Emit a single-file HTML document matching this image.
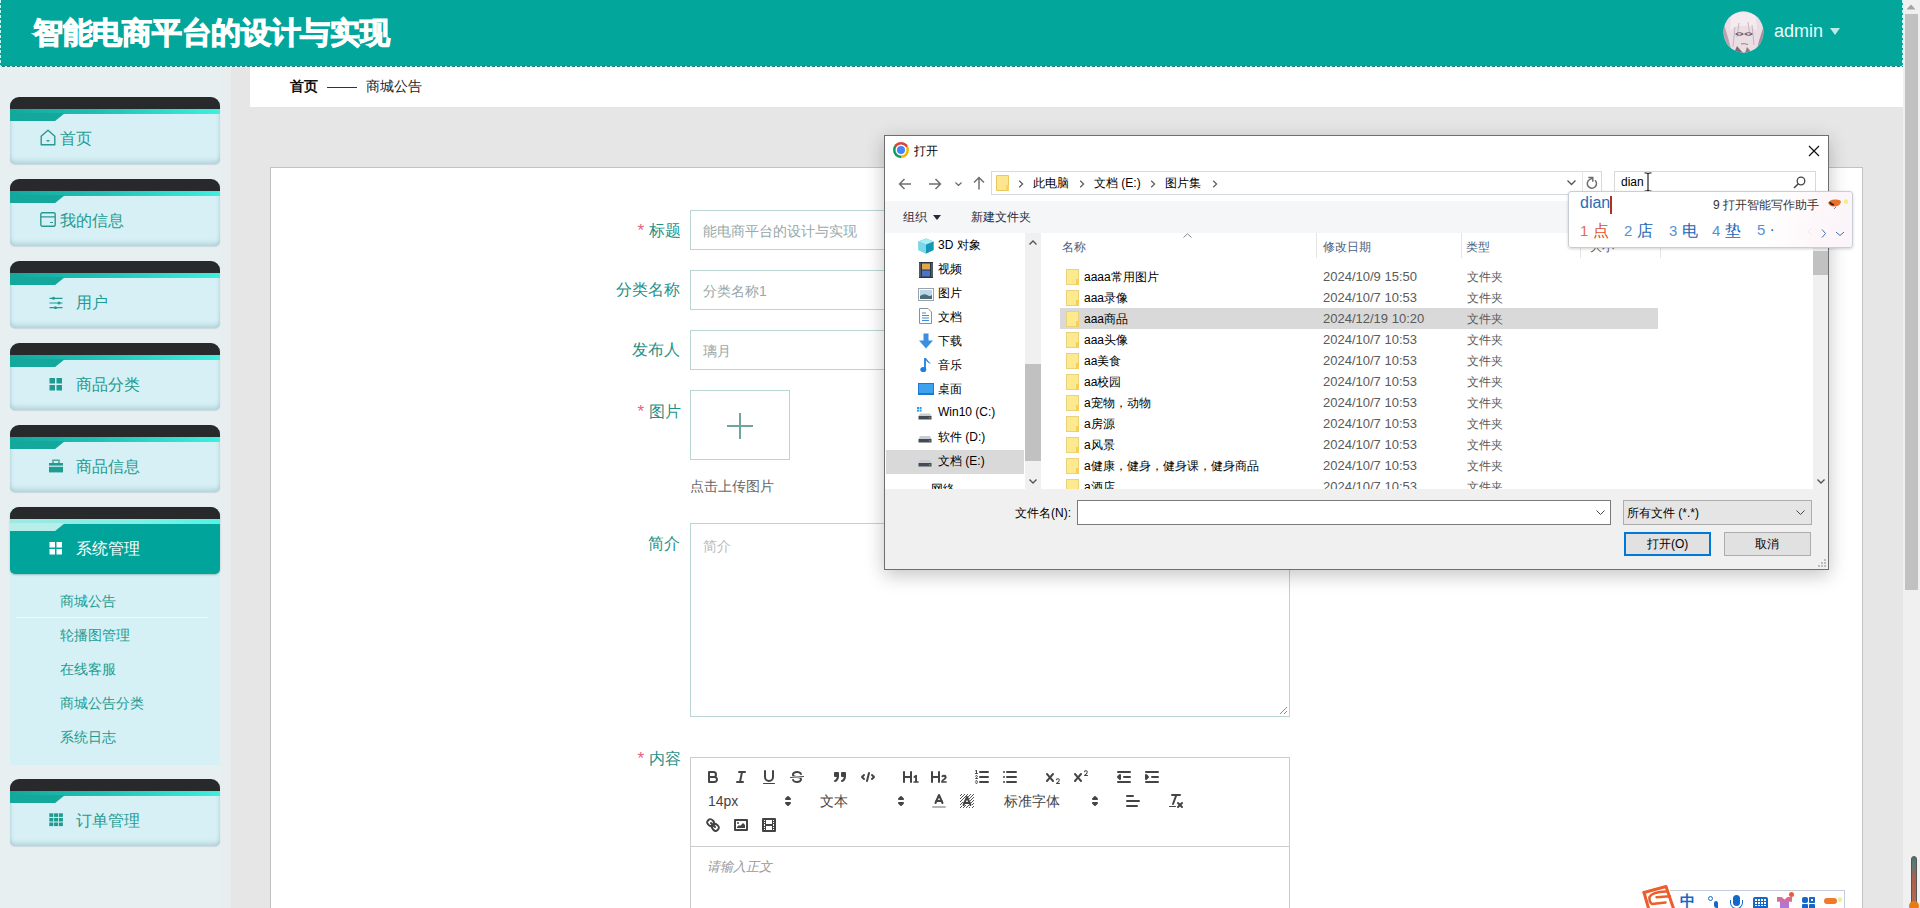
<!DOCTYPE html>
<html><head><meta charset="utf-8">
<style>
*{box-sizing:border-box;margin:0;padding:0}
html,body{width:1920px;height:908px;overflow:hidden}
body{position:relative;background:#e6e6e6;font-family:"Liberation Sans",sans-serif;color:#333}
.abs{position:absolute}
#header{left:0;top:0;width:1903px;height:67px;background:#02a69b}
#hb{left:0;top:66px;width:1903px;height:1px;background:repeating-linear-gradient(90deg,#c4faf3 0 2px,#2f7d76 2px 5px)}
#hl{left:0;top:0;width:1px;height:66px;background:repeating-linear-gradient(180deg,#c4faf3 0 3px,#02a69b 3px 5px)}
#hr{left:1902px;top:0;width:1px;height:66px;background:repeating-linear-gradient(180deg,#c4faf3 0 3px,#02a69b 3px 5px)}
#title{left:33px;top:13px;font-size:30px;letter-spacing:-0.3px;font-weight:900;color:#fff;-webkit-text-stroke:1.1px #fff;white-space:nowrap}
#admin{left:1774px;top:21px;font-size:18px;color:#e8fffb}
#caret{left:1830px;top:28px;width:0;height:0;border-left:5px solid transparent;border-right:5px solid transparent;border-top:7px solid #b9ece6}
#sidebar{left:0;top:67px;width:231px;height:841px;background:linear-gradient(90deg,#e7eff1 0,#e7eff1 94%,#e9ecec 100%)}
.mi{position:absolute;left:10px;width:210px;height:67px;border-radius:9px 9px 5px 5px;overflow:hidden;background:#d6f0f5;box-shadow:inset 0 -4px 4px -1px rgba(120,160,175,.35),inset 3px 0 3px -2px rgba(150,185,195,.3),inset -3px 0 3px -2px rgba(150,185,195,.3),0 1px 1px rgba(150,175,185,.35)}
.mi .dk{position:absolute;left:0;top:0;width:210px;height:12px;background:#27292b}
.mi .st{position:absolute;left:0;top:12px;width:210px;height:5px;background:linear-gradient(90deg,#12a99d,#1fbfb2 40%,#3df0e0 100%)}
.mi .sl{position:absolute;left:0;top:16px;width:55px;height:8px;background:#14a89c;clip-path:polygon(0 0,100% 0,100% 0,82% 100%,0 100%)}
.mi .lb{position:absolute;top:32px;font-size:16px;color:#1f9b92;white-space:nowrap}
.mi.act{background:#00a49a;box-shadow:0 1px 2px rgba(0,80,70,.3)}
.mi.act .st{background:linear-gradient(90deg,#9ee8e2,#7ff0e6 60%,#52f4e6)}
.mi.act .sl{background:#b8eeea}
.mi.act .lb{color:#fff}
#sub{left:10px;top:574px;width:210px;height:191px;background:#d6f1f5}
.si{position:absolute;left:50px;font-size:14px;color:#1f9b92;white-space:nowrap}
#bc{left:250px;top:67px;width:1653px;height:40px;background:#fff}
#card{left:270px;top:167px;width:1593px;height:760px;background:#fff;border:1px solid #c2c2c2}
.lab{position:absolute;font-size:16px;color:#1f9188;text-align:right;white-space:nowrap}
.lab i{font-style:normal;color:#e2637f;margin-right:5px;font-size:17px;position:relative;top:0px}
.inp{position:absolute;left:690px;width:600px;height:40px;border:1px solid #b9d6d3;background:#fff}
.ph{position:absolute;left:12px;top:12px;font-size:14px;color:#97a9a8;white-space:nowrap}
#scroll{left:1903px;top:0;width:17px;height:908px;background:#f0f0f0}

#dlg{position:absolute;left:884px;top:135px;width:945px;height:435px;background:#fff;border:1px solid #6e6e6e;box-shadow:0 5px 18px rgba(0,0,0,.24);font-size:12px;color:#000;overflow:hidden}
#dlg .a{position:absolute;white-space:nowrap}
.nv{position:absolute;left:53px;font-size:12px;color:#000;white-space:nowrap}
.ni{position:absolute;left:32px;width:16px;height:16px}
.fr{position:absolute;left:0;width:944px;height:21px}
.fr .fi{position:absolute;left:181px;top:3px;width:13px;height:16px;background:#fde98e;border:1px solid #ead27c}
.fr .fi:before{content:"";position:absolute;right:-1px;bottom:-1px;width:3px;height:6px;background:#f6cf5a}
.fr .fn{position:absolute;left:199px;top:3px;color:#000}
.fr .fd{position:absolute;left:438px;top:3px;color:#5a5a5a;font-size:13px}
.fr .ft{position:absolute;left:582px;top:3px;color:#5a5a5a}

.qb{position:absolute;width:18px;height:18px}
.qb .s{fill:none;stroke:#444;stroke-width:2;stroke-linecap:round;stroke-linejoin:round}
.qb .t{fill:none;stroke:#444;stroke-width:1;stroke-linecap:round;stroke-linejoin:round}
.qb .f{fill:#444}
.pk{position:absolute;font-size:14px;color:#444;font-weight:500;white-space:nowrap}
</style></head><body>
<div id="header" class="abs"></div><div id="hb" class="abs"></div><div id="hl" class="abs"></div><div id="hr" class="abs"></div>
<div id="title" class="abs">智能电商平台的设计与实现</div>
<svg class="abs" style="left:1723px;top:11px" width="41" height="42" viewBox="0 0 41 42"><defs><clipPath id="avc"><ellipse cx="20.5" cy="21" rx="20" ry="20.7"/></clipPath></defs><g clip-path="url(#avc)"><rect width="41" height="42" fill="#eadde3"/><path d="M0 10L6 30L9 42H0Z" fill="#b9a3b0"/><path d="M41 14L36 30L33 42H41Z" fill="#a28e9c"/><path d="M8 4Q20 -2 33 5L34 20Q28 14 20 15Q12 14 7 20Z" fill="#f3ebef"/><path d="M14 35L20 42H11Z" fill="#7d6a78"/><path d="M24 36L29 42H22Z" fill="#8e7a88"/><path d="M12 16L10 36M29 14L31 34M16 12L14 26M25 11L27 25" stroke="#c8b4bf" stroke-width="1"/></g><path d="M13 23Q16.5 20.5 20 23Q16.5 25.5 13 23Z" fill="#fff" stroke="#6d5a66" stroke-width="1.1"/><path d="M22 23Q25.5 20.5 29 23Q25.5 25.5 22 23Z" fill="#fff" stroke="#6d5a66" stroke-width="1.1"/><path d="M18 33Q21 32 25 33.5" stroke="#8a7080" stroke-width="0.9" fill="none"/></svg>
<div id="admin" class="abs">admin</div>
<div id="caret" class="abs"></div>

<div id="sidebar" class="abs"></div>
<div class="mi" style="top:97px"><div class="dk"></div><div class="st"></div><div class="sl"></div><svg class="abs" style="left:30px;top:32px" width="16" height="17" viewBox="0 0 16 17"><path d="M1.2 7.2L8 1.2L14.8 7.2V15.8H1.2Z" fill="none" stroke="#2a9a90" stroke-width="1.4" stroke-linejoin="round"/><path d="M6.5 11.2L8 12.2L9.5 11.2" fill="none" stroke="#2a9a90" stroke-width="1.2"/></svg><div class="lb" style="left:50px">首页</div></div>
<div class="mi" style="top:179px"><div class="dk"></div><div class="st"></div><div class="sl"></div><svg class="abs" style="left:30px;top:33px" width="16" height="15" viewBox="0 0 16 15"><rect x="0.8" y="0.8" width="14.4" height="13.4" rx="1.5" fill="none" stroke="#2a9a90" stroke-width="1.4"/><path d="M1 4.8H15" stroke="#2a9a90" stroke-width="1.3"/><path d="M10 10.5H13" stroke="#2a9a90" stroke-width="1"/></svg><div class="lb" style="left:50px">我的信息</div></div>
<div class="mi" style="top:261px"><div class="dk"></div><div class="st"></div><div class="sl"></div><svg class="abs" style="left:39px;top:35px" width="14" height="13" viewBox="0 0 14 13"><path d="M0.5 2.3H13.5M0.5 7H13.5M0.5 11.7H13.5" stroke="#1f9b8f" stroke-width="1.2"/><circle cx="4.5" cy="2.3" r="1.5" fill="#1f9b8f"/><circle cx="10" cy="7" r="1.5" fill="#1f9b8f"/><circle cx="6.5" cy="11.7" r="1.5" fill="#1f9b8f"/></svg><div class="lb" style="left:66px">用户</div></div>
<div class="mi" style="top:343px"><div class="dk"></div><div class="st"></div><div class="sl"></div><svg class="abs" style="left:39px;top:35px" width="14" height="13" viewBox="0 0 14 13"><rect x="0.5" y="0" width="5.5" height="5.5" fill="#1f9b8f"/><rect x="7.5" y="0" width="5.5" height="5.5" fill="#1f9b8f"/><rect x="0.5" y="7" width="5.5" height="5.5" fill="#1f9b8f"/><rect x="7.5" y="7" width="5.5" height="5.5" fill="#1f9b8f"/></svg><div class="lb" style="left:66px">商品分类</div></div>
<div class="mi" style="top:425px"><div class="dk"></div><div class="st"></div><div class="sl"></div><svg class="abs" style="left:39px;top:34px" width="14" height="14" viewBox="0 0 14 14"><path d="M4 4V1.2H10V4" fill="none" stroke="#4ba69c" stroke-width="1.6"/><rect x="0" y="4" width="14" height="2.6" fill="#1f9b8f"/><rect x="0" y="7.8" width="14" height="5.6" fill="#1f9b8f"/></svg><div class="lb" style="left:66px">商品信息</div></div>
<div id="sub" class="abs">
 <div class="si" style="top:19px">商城公告</div>
 <div class="abs" style="left:6px;top:43px;width:192px;height:1px;background:#eefbfd"></div>
 <div class="si" style="top:53px">轮播图管理</div>
 <div class="si" style="top:87px">在线客服</div>
 <div class="si" style="top:121px">商城公告分类</div>
 <div class="si" style="top:155px">系统日志</div>
</div>
<div class="mi act" style="top:507px"><div class="dk"></div><div class="st"></div><div class="sl"></div><svg class="abs" style="left:39px;top:35px" width="14" height="13" viewBox="0 0 14 13"><rect x="0.5" y="0" width="5.5" height="5.5" fill="#ffffff"/><rect x="7.5" y="0" width="5.5" height="5.5" fill="#ffffff"/><rect x="0.5" y="7" width="5.5" height="5.5" fill="#ffffff"/><rect x="7.5" y="7" width="5.5" height="5.5" fill="#ffffff"/></svg><div class="lb" style="left:66px">系统管理</div></div>
<div class="mi" style="top:779px"><div class="dk"></div><div class="st"></div><div class="sl"></div><svg class="abs" style="left:39px;top:34px" width="14" height="14" viewBox="0 0 14 14"><rect x="0.3" y="0.3" width="4" height="3.6" fill="#1f9b8f"/><rect x="0.3" y="4.8999999999999995" width="4" height="3.6" fill="#1f9b8f"/><rect x="0.3" y="9.5" width="4" height="3.6" fill="#1f9b8f"/><rect x="5.1" y="0.3" width="4" height="3.6" fill="#1f9b8f"/><rect x="5.1" y="4.8999999999999995" width="4" height="3.6" fill="#1f9b8f"/><rect x="5.1" y="9.5" width="4" height="3.6" fill="#1f9b8f"/><rect x="9.9" y="0.3" width="4" height="3.6" fill="#1f9b8f"/><rect x="9.9" y="4.8999999999999995" width="4" height="3.6" fill="#1f9b8f"/><rect x="9.9" y="9.5" width="4" height="3.6" fill="#1f9b8f"/></svg><div class="lb" style="left:66px">订单管理</div></div>

<div id="bc" class="abs"></div>
<div class="abs" style="left:290px;top:78px;font-size:14px;font-weight:bold;color:#111">首页</div>
<div class="abs" style="left:327px;top:87px;width:30px;height:1px;background:#333"></div>
<div class="abs" style="left:366px;top:78px;font-size:14px;color:#222">商城公告</div>

<div id="card" class="abs"></div>
<div class="lab" style="left:601px;top:221px;width:80px"><i>*</i>标题</div>
<div class="inp" style="top:210px"><div class="ph">能电商平台的设计与实现</div></div>
<div class="lab" style="left:580px;top:280px;width:100px">分类名称</div>
<div class="inp" style="top:270px"><div class="ph">分类名称1</div></div>
<div class="lab" style="left:580px;top:340px;width:100px">发布人</div>
<div class="inp" style="top:330px"><div class="ph">璃月</div></div>


<div class="lab" style="left:581px;top:402px;width:100px"><i>*</i>图片</div>
<div class="abs" style="left:690px;top:390px;width:100px;height:70px;border:1px solid #b9d6d3;background:#fff"></div>
<div class="abs" style="left:727px;top:425px;width:26px;height:2px;background:#6fa5a0"></div>
<div class="abs" style="left:739px;top:413px;width:2px;height:26px;background:#6fa5a0"></div>
<div class="abs" style="left:690px;top:478px;font-size:14px;color:#666">点击上传图片</div>
<div class="lab" style="left:580px;top:534px;width:100px">简介</div>
<div class="abs" style="left:690px;top:523px;width:600px;height:194px;border:1px solid #b9d6d3;background:#fff"><div class="ph" style="left:12px;top:14px;color:#bbb">简介</div></div>
<div class="lab" style="left:581px;top:749px;width:100px"><i>*</i>内容</div>
<div id="editor" class="abs" style="left:690px;top:757px;width:600px;height:200px;border:1px solid #ccc;background:#fff">
 <div class="abs" style="left:0;top:88px;width:598px;height:1px;background:#ccc"></div>
 <div class="abs" style="left:16px;top:100px;font-size:13px;color:#999;font-style:italic">请输入正文</div>
</div>

<svg class="qb" style="left:704px;top:768px" viewBox="0 0 18 18"><path class="s" d="M5,4H9.5A2.5,2.5,0,0,1,12,6.5v0A2.5,2.5,0,0,1,9.5,9H5A0,0,0,0,1,5,9V4A0,0,0,0,1,5,4Z"/><path class="s" d="M5,9h5.5A2.5,2.5,0,0,1,13,11.5v0A2.5,2.5,0,0,1,10.5,14H5a0,0,0,0,1,0,0V9A0,0,0,0,1,5,9Z"/></svg><svg class="qb" style="left:732px;top:768px" viewBox="0 0 18 18"><line class="s" x1="7" x2="13" y1="4" y2="4"/><line class="s" x1="5" x2="11" y1="14" y2="14"/><line class="s" x1="8" x2="10" y1="14" y2="4"/></svg><svg class="qb" style="left:760px;top:768px" viewBox="0 0 18 18"><path class="s" d="M5,3V9a4.012,4.012,0,0,0,4,4H9a4.012,4.012,0,0,0,4-4V3"/><rect class="f" height="1" rx="0.5" ry="0.5" width="12" x="3" y="15"/></svg><svg class="qb" style="left:788px;top:768px" viewBox="0 0 18 18"><line class="t" x1="15.5" x2="2.5" y1="8.5" y2="9.5"/><path class="f" d="M9.007,8C6.542,7.791,6,7.519,6,6.5,6,5.792,7.283,5,9,5c1.571,0,2.765.679,2.969,1.309a1,1,0,0,0,1.9-.617C13.356,4.106,11.354,3,9,3,6.2,3,4,4.538,4,6.5a3.2,3.2,0,0,0,.5,1.843Z"/><path class="f" d="M8.984,10C11.457,10.208,12,10.479,12,11.5c0,.708-1.283,1.5-3,1.5-1.571,0-2.765-.679-2.969-1.309a1,1,0,1,0-1.9.617C4.644,13.894,6.646,15,9,15c2.8,0,5-1.538,5-3.5a3.2,3.2,0,0,0-.5-1.843Z"/></svg><svg class="qb" style="left:831px;top:768px" viewBox="0 0 18 18"><rect class="f s" height="3" width="3" x="4" y="5"/><rect class="f s" height="3" width="3" x="11" y="5"/><path class="s" style="fill:#444" d="M7,8c0,4.031-3,5-3,5"/><path class="s" style="fill:#444" d="M14,8c0,4.031-3,5-3,5"/></svg><svg class="qb" style="left:859px;top:768px" viewBox="0 0 18 18"><polyline class="s" points="5 7 3 9 5 11"/><polyline class="s" points="13 7 15 9 13 11"/><line class="s" x1="10" x2="8" y1="5" y2="13"/></svg><svg class="qb" style="left:902px;top:768px" viewBox="0 0 18 18"><path class="f" d="M10,4V14a1,1,0,0,1-2,0V10H3v4a1,1,0,0,1-2,0V4A1,1,0,0,1,3,4V8H8V4a1,1,0,0,1,2,0Zm6.06787,9.209H14.98975V7.59863a.54085.54085,0,0,0-.605-.60547h-.62744a1.01119,1.01119,0,0,0-.748.29688L11.645,8.56641a.5435.5435,0,0,0-.022.8584l.28613.30762a.53861.53861,0,0,0,.84717.0332l.09912-.08789a1.2137,1.2137,0,0,0,.2417-.35254h.02246s-.01123.30859-.01123.60547V13.209H12.041a.54085.54085,0,0,0-.605.60547v.43945a.54085.54085,0,0,0,.605.60547h4.02686a.54085.54085,0,0,0,.605-.60547v-.43945A.54085.54085,0,0,0,16.06787,13.209Z"/></svg><svg class="qb" style="left:930px;top:768px" viewBox="0 0 18 18"><path class="f" d="M16.73975,13.81445v.43945a.54085.54085,0,0,1-.605.60547H11.855a.58392.58392,0,0,1-.64893-.60547V14.0127c0-2.90527,3.39941-3.42187,3.39941-4.55469a.77675.77675,0,0,0-.84717-.78125,1.17684,1.17684,0,0,0-.83594.38477c-.2749.26367-.561.374-.85791.13184l-.4292-.34082c-.30811-.24219-.38525-.51758-.1543-.81445a2.97155,2.97155,0,0,1,2.45361-1.17676,2.45393,2.45393,0,0,1,2.68408,2.40918c0,2.45312-3.1792,2.92676-3.27832,3.93848h2.79443A.54085.54085,0,0,1,16.73975,13.81445ZM9,3A.99974.99974,0,0,0,8,4V8H3V4A1,1,0,0,0,1,4V14a1,1,0,0,0,2,0V10H8v4a1,1,0,0,0,2,0V4A.99974.99974,0,0,0,9,3Z"/></svg><svg class="qb" style="left:973px;top:768px" viewBox="0 0 18 18"><line class="s" x1="7" x2="15" y1="4" y2="4"/><line class="s" x1="7" x2="15" y1="9" y2="9"/><line class="s" x1="7" x2="15" y1="14" y2="14"/><line class="t" x1="2.5" x2="4.5" y1="5.5" y2="5.5"/><path class="f" d="M3.5,6A0.5,0.5,0,0,1,3,5.5V3.085l-0.276.138A0.5,0.5,0,0,1,2.053,3c-0.124-.247-0.023-0.324.224-0.447l1-.5A0.5,0.5,0,0,1,4,2.5v3A0.5,0.5,0,0,1,3.5,6Z"/><path class="t" d="M4.5,10.5h-2c0-.234,1.85-1.076,1.85-2.234A0.959,0.959,0,0,0,2.5,8.156"/><path class="t" d="M2.5,14.846a0.959,0.959,0,0,0,1.85-.109A0.7,0.7,0,0,0,3.75,14a0.688,0.688,0,0,0,.6-0.736,0.959,0.959,0,0,0-1.85-.109"/></svg><svg class="qb" style="left:1001px;top:768px" viewBox="0 0 18 18"><line class="s" x1="6" x2="15" y1="4" y2="4"/><line class="s" x1="6" x2="15" y1="9" y2="9"/><line class="s" x1="6" x2="15" y1="14" y2="14"/><line class="s" x1="3" x2="3" y1="4" y2="4"/><line class="s" x1="3" x2="3" y1="9" y2="9"/><line class="s" x1="3" x2="3" y1="14" y2="14"/></svg><svg class="qb" style="left:1044px;top:768px" viewBox="0 0 18 18"><path class="f" d="M15.5,15H13.861a3.858,3.858,0,0,0,1.914-2.975,1.8,1.8,0,0,0-1.6-1.751A1.921,1.921,0,0,0,12.021,11.7a0.50013,0.50013,0,1,0,.957.291h0a0.914,0.914,0,0,1,1.053-.725,0.81,0.81,0,0,1,.744.762c0,1.076-1.16971,1.86982-1.93971,2.43082A1.45639,1.45639,0,0,0,12,15.5a0.5,0.5,0,0,0,.5.5h3A0.5,0.5,0,0,0,15.5,15Z"/><path class="f" d="M9.65,5.241a1,1,0,0,0-1.409.108L6,7.964,3.759,5.349A1,1,0,0,0,2.192,6.59178Q2.21541,6.6213,2.241,6.649L4.684,9.5,2.241,12.35A1,1,0,0,0,3.71,13.70722q0.02557-.02768.049-0.05722L6,11.036,8.241,13.65a1,1,0,1,0,1.567-1.24277Q9.78459,12.3777,9.759,12.35L7.316,9.5,9.759,6.651A1,1,0,0,0,9.65,5.241Z"/></svg><svg class="qb" style="left:1072px;top:768px" viewBox="0 0 18 18"><path class="f" d="M15.5,7H13.861a4.015,4.015,0,0,0,1.914-2.975,1.8,1.8,0,0,0-1.6-1.751A1.922,1.922,0,0,0,12.021,3.7a0.5,0.5,0,1,0,.957.291,0.917,0.917,0,0,1,1.053-.725,0.81,0.81,0,0,1,.744.762c0,1.077-1.164,1.925-1.934,2.486A1.423,1.423,0,0,0,12,7.5a0.5,0.5,0,0,0,.5.5h3A0.5,0.5,0,0,0,15.5,7Z"/><path class="f" d="M9.651,5.241a1,1,0,0,0-1.41.108L6,7.964,3.759,5.349a1,1,0,1,0-1.519,1.3L4.683,9.5,2.241,12.35a1,1,0,1,0,1.519,1.3L6,11.036,8.241,13.65a1,1,0,0,0,1.519-1.3L7.317,9.5,9.759,6.651A1,1,0,0,0,9.651,5.241Z"/></svg><svg class="qb" style="left:1115px;top:768px" viewBox="0 0 18 18"><line class="s" x1="3" x2="15" y1="14" y2="14"/><line class="s" x1="3" x2="15" y1="4" y2="4"/><line class="s" x1="9" x2="15" y1="9" y2="9"/><polyline class="s" style="fill:#444" points="5 7 5 11 3 9 5 7"/></svg><svg class="qb" style="left:1143px;top:768px" viewBox="0 0 18 18"><line class="s" x1="3" x2="15" y1="14" y2="14"/><line class="s" x1="3" x2="15" y1="4" y2="4"/><line class="s" x1="9" x2="15" y1="9" y2="9"/><polyline class="s" style="fill:#444" points="3 7 3 11 5 9 3 7"/></svg><div class="pk" style="left:708px;top:793px">14px</div><svg class="qb" style="left:779px;top:792px" viewBox="0 0 18 18"><polygon class="s" style="fill:#444" points="7 11 9 13 11 11 7 11"/><polygon class="s" style="fill:#444" points="7 7 9 5 11 7 7 7"/></svg><div class="pk" style="left:820px;top:793px">文本</div><svg class="qb" style="left:892px;top:792px" viewBox="0 0 18 18"><polygon class="s" style="fill:#444" points="7 11 9 13 11 11 7 11"/><polygon class="s" style="fill:#444" points="7 7 9 5 11 7 7 7"/></svg><svg class="qb" style="left:930px;top:792px" viewBox="0 0 18 18"><line class="s" style="stroke-opacity:.4" x1="3" x2="15" y1="15" y2="15"/><polyline class="s" points="5.5 11 9 3 12.5 11"/><line class="s" x1="11.63" x2="6.38" y1="9" y2="9"/></svg><svg class="qb" style="left:958px;top:792px" viewBox="0 0 18 18"><g class="f" style="opacity:.9"><rect height="1" width="1" x="4" y="4"/><rect height="1" width="1" x="2" y="6"/><rect height="1" width="1" x="3" y="5"/><rect height="1" width="1" x="4" y="7"/><rect height="1" width="1" x="2" y="12"/><rect height="1" width="1" x="2" y="9"/><rect height="1" width="1" x="2" y="15"/><rect height="1" width="1" x="3" y="8"/><rect height="1" width="1" x="12" y="2"/><rect height="1" width="1" x="11" y="3"/><rect height="1" width="1" x="2" y="3"/><rect height="1" width="1" x="6" y="2"/><rect height="1" width="1" x="3" y="2"/><rect height="1" width="1" x="5" y="3"/><rect height="1" width="1" x="9" y="2"/><rect height="1" width="1" x="15" y="14"/><rect height="1" width="1" x="13" y="7"/><rect height="1" width="1" x="15" y="5"/><rect height="1" width="1" x="14" y="6"/><rect height="1" width="1" x="15" y="8"/><rect height="1" width="1" x="14" y="9"/><rect height="1" width="1" x="14" y="3"/><rect height="1" width="1" x="15" y="2"/><rect height="1" width="1" x="12" y="5"/><rect height="1" width="1" x="13" y="4"/><rect height="1" width="1" x="9" y="14"/><rect height="1" width="1" x="8" y="15"/><rect height="1" width="1" x="5" y="15"/><rect height="1" width="1" x="11" y="15"/><rect height="1" width="1" x="14" y="15"/><rect height="1" width="1" x="15" y="11"/><rect height="1" width="1" x="3" y="11"/><rect height="1" width="1" x="4" y="10"/><rect height="1" width="1" x="5" y="6"/><rect height="1" width="1" x="6" y="5"/><rect height="1" width="1" x="13" y="10"/><rect height="1" width="1" x="12" y="8"/><rect height="1" width="1" x="3" y="14"/><rect height="1" width="1" x="7" y="13"/><rect height="1" width="1" x="10" y="13"/><rect height="1" width="1" x="14" y="12"/><rect height="1" width="1" x="6" y="14"/><rect height="1" width="1" x="7" y="4"/><rect height="1" width="1" x="10" y="4"/><rect height="1" width="1" x="8" y="3"/><rect height="1" width="1" x="11" y="6"/></g><polyline class="s" points="5.5 13 9 5 12.5 13"/><line class="s" x1="11.63" x2="6.38" y1="11" y2="11"/></svg><div class="pk" style="left:1004px;top:793px">标准字体</div><svg class="qb" style="left:1086px;top:792px" viewBox="0 0 18 18"><polygon class="s" style="fill:#444" points="7 11 9 13 11 11 7 11"/><polygon class="s" style="fill:#444" points="7 7 9 5 11 7 7 7"/></svg><svg class="qb" style="left:1124px;top:792px" viewBox="0 0 18 18"><line class="s" x1="3" x2="15" y1="9" y2="9"/><line class="s" x1="3" x2="13" y1="14" y2="14"/><line class="s" x1="3" x2="9" y1="4" y2="4"/></svg><svg class="qb" style="left:1167px;top:792px" viewBox="0 0 18 18"><line class="s" x1="5" x2="13" y1="3" y2="3"/><line class="s" x1="6" x2="9.35" y1="12" y2="3"/><line class="s" x1="11" x2="15" y1="11" y2="15"/><line class="s" x1="15" x2="11" y1="11" y2="15"/><rect class="f" height="1" rx="0.5" ry="0.5" width="7" x="2" y="14"/></svg><svg class="qb" style="left:704px;top:816px" viewBox="0 0 18 18"><line class="s" x1="7" x2="11" y1="7" y2="11"/><path class="s" d="M8.9,4.577a3.476,3.476,0,0,1,.36,4.679A3.476,3.476,0,0,1,4.577,8.9C3.185,7.5,2.035,6.4,4.217,4.217S7.5,3.185,8.9,4.577Z"/><path class="s" d="M13.423,9.1a3.476,3.476,0,0,0-4.679-.36,3.476,3.476,0,0,0,.36,4.679c1.392,1.392,2.5,2.542,4.679.36S14.815,10.5,13.423,9.1Z"/></svg><svg class="qb" style="left:732px;top:816px" viewBox="0 0 18 18"><rect class="s" height="10" width="12" x="3" y="4"/><circle class="f" cx="6" cy="7" r="1"/><polyline class="f" points="5 12 5 11 7 9 8 10 11 7 13 9 13 12 5 12"/></svg><svg class="qb" style="left:760px;top:816px" viewBox="0 0 18 18"><rect class="s" height="12" width="12" x="3" y="3"/><rect class="f" height="12" width="1" x="5" y="3"/><rect class="f" height="12" width="1" x="12" y="3"/><rect class="f" height="2" width="8" x="5" y="8"/><rect class="f" height="1" width="3" x="2" y="5"/><rect class="f" height="1" width="3" x="2" y="7"/><rect class="f" height="1" width="3" x="2" y="10"/><rect class="f" height="1" width="3" x="2" y="12"/><rect class="f" height="1" width="3" x="13" y="5"/><rect class="f" height="1" width="3" x="13" y="7"/><rect class="f" height="1" width="3" x="13" y="10"/><rect class="f" height="1" width="3" x="13" y="12"/></svg>
<div id="dlg">
 <div class="a" style="left:8px;top:6px;width:16px;height:16px;border-radius:50%;background:conic-gradient(from -60deg,#db4437 0 120deg,#f4b400 120deg 240deg,#0f9d58 240deg 360deg)"><div style="position:absolute;left:4px;top:4px;width:8px;height:8px;border-radius:50%;background:#4285f4;box-shadow:0 0 0 1.5px #fff"></div></div>
 <div class="a" style="left:29px;top:7px">打开</div>
 <svg class="a" style="left:923px;top:9px" width="12" height="12" viewBox="0 0 12 12"><path d="M1 1L11 11M11 1L1 11" stroke="#111" stroke-width="1.2"/></svg>
 <!-- address row -->
 <svg class="a" style="left:13px;top:42px" width="14" height="12" viewBox="0 0 14 12"><path d="M13 6H1.5M6.5 1L1.5 6L6.5 11" stroke="#707070" stroke-width="1.5" fill="none"/></svg>
 <svg class="a" style="left:43px;top:42px" width="14" height="12" viewBox="0 0 14 12"><path d="M1 6H12.5M7.5 1L12.5 6L7.5 11" stroke="#707070" stroke-width="1.5" fill="none"/></svg>
 <svg class="a" style="left:70px;top:46px" width="7" height="4" viewBox="0 0 7 4"><path d="M0.5 0.5L3.5 3.5L6.5 0.5" stroke="#6a6a6a" stroke-width="1.2" fill="none"/></svg>
 <svg class="a" style="left:88px;top:40px" width="12" height="14" viewBox="0 0 12 14"><path d="M6 13.5V1.5M1 6.5L6 1.5L11 6.5" stroke="#707070" stroke-width="1.5" fill="none"/></svg>
 <div class="a" style="left:106px;top:35px;width:611px;height:24px;border:1px solid #d9d9d9"></div>
 <svg class="a" style="left:111px;top:39px" width="14" height="16" viewBox="0 0 14 16"><path d="M0.5 0.5H12.5V15.5H0.5Z" fill="#fde68f" stroke="#e9c95c" stroke-width="1"/><path d="M10 10H13V15.5H10Z" fill="#f3d36e"/></svg>
 <svg class="a" style="left:133px;top:44px" width="6" height="8" viewBox="0 0 6 8"><path d="M1.2 0.8L4.6 4L1.2 7.2" stroke="#5a5a5a" stroke-width="1.2" fill="none"/></svg>
 <div class="a" style="left:148px;top:39px">此电脑</div>
 <svg class="a" style="left:194px;top:44px" width="6" height="8" viewBox="0 0 6 8"><path d="M1.2 0.8L4.6 4L1.2 7.2" stroke="#5a5a5a" stroke-width="1.2" fill="none"/></svg>
 <div class="a" style="left:209px;top:39px">文档 (E:)</div>
 <svg class="a" style="left:265px;top:44px" width="6" height="8" viewBox="0 0 6 8"><path d="M1.2 0.8L4.6 4L1.2 7.2" stroke="#5a5a5a" stroke-width="1.2" fill="none"/></svg>
 <div class="a" style="left:280px;top:39px">图片集</div>
 <svg class="a" style="left:327px;top:44px" width="6" height="8" viewBox="0 0 6 8"><path d="M1.2 0.8L4.6 4L1.2 7.2" stroke="#5a5a5a" stroke-width="1.2" fill="none"/></svg>
 <svg class="a" style="left:682px;top:44px" width="9" height="6" viewBox="0 0 9 6"><path d="M0.5 0.5L4.5 4.5L8.5 0.5" stroke="#555" stroke-width="1.3" fill="none"/></svg>
 <div class="a" style="left:697px;top:35px;width:1px;height:24px;background:#e5e5e5"></div>
 <svg class="a" style="left:699px;top:39px" width="16" height="16" viewBox="0 0 16 16"><path d="M11 5.2A4.6 4.6 0 1 1 5.6 4.6L8.2 3.2" stroke="#6e6e6e" stroke-width="1.5" fill="none"/><path d="M4.3 2.6H8.8V6.8" stroke="#6e6e6e" stroke-width="1.5" fill="none"/></svg>
 <div class="a" style="left:729px;top:35px;width:202px;height:24px;border:1px solid #d9d9d9"></div>
 <div class="a" style="left:736px;top:39px;font-size:12px">dian</div>
 <svg class="a" style="left:908px;top:40px" width="13" height="13" viewBox="0 0 13 13"><circle cx="8" cy="5" r="3.8" stroke="#444" stroke-width="1.3" fill="none"/><path d="M5.3 7.7L1 12" stroke="#444" stroke-width="1.5"/></svg>
 <!-- command bar -->
 <div class="a" style="left:0;top:65px;width:944px;height:32px;background:#f5f6f7"></div>
 <div class="a" style="left:18px;top:73px;color:#1e2b40">组织</div>
 <svg class="a" style="left:48px;top:79px" width="8" height="5" viewBox="0 0 8 5"><path d="M0 0H8L4 5Z" fill="#1e2b40"/></svg>
 <div class="a" style="left:86px;top:73px;color:#1e2b40">新建文件夹</div>
 <!-- nav pane -->
 <div class="a" style="left:1px;top:314px;width:138px;height:24px;background:#d9d9d9"></div>
 <svg class="a" style="left:33px;top:102px" width="16" height="16" viewBox="0 0 16 16"><path d="M8 0.5L15.5 3.5V12L8 15.5L0.5 12V3.5Z" fill="#27b3cf"/><path d="M0.5 3.5L8 6.5V15.5L0.5 12Z" fill="#7ad8ea"/><path d="M8 6.5L15.5 3.5V12L8 15.5Z" fill="#1497b5"/><path d="M0.5 3.5L8 0.5L15.5 3.5L8 6.5Z" fill="#a8ecf6"/></svg><div class="nv" style="top:101px;left:53px">3D 对象</div>
<svg class="a" style="left:34px;top:126px" width="14" height="16" viewBox="0 0 14 16"><rect x="0" y="0" width="14" height="16" fill="#2d3442"/><rect x="3" y="1.5" width="8" height="6" fill="#e0a84a"/><rect x="3" y="8.5" width="8" height="6" fill="#4a74c8"/><path d="M1 1.5V14.5M13 1.5V14.5" stroke="#ccc" stroke-width="1" stroke-dasharray="1 1"/></svg><div class="nv" style="top:125px;left:53px">视频</div>
<svg class="a" style="left:33px;top:152px" width="16" height="13" viewBox="0 0 16 13"><rect x="0.5" y="0.5" width="15" height="12" fill="#fff" stroke="#9aa3ad"/><rect x="2" y="2" width="12" height="9" fill="#bcd6ea"/><path d="M2 8Q6 5 9 7T14 7V11H2Z" fill="#4a6e78"/></svg><div class="nv" style="top:149px;left:53px">图片</div>
<svg class="a" style="left:34px;top:172px" width="13" height="16" viewBox="0 0 13 16"><path d="M0.5 0.5H9L12.5 4V15.5H0.5Z" fill="#fff" stroke="#8a9299"/><path d="M3 5H7M3 7.5H10M3 10H10M3 12.5H10" stroke="#3b8ed8" stroke-width="1"/></svg><div class="nv" style="top:173px;left:53px">文档</div>
<svg class="a" style="left:33px;top:197px" width="16" height="16" viewBox="0 0 16 16"><path d="M5.5 0.5H10.5V7.5H15L8 15.5L1 7.5H5.5Z" fill="#3c8ee0"/></svg><div class="nv" style="top:197px;left:53px">下载</div>
<svg class="a" style="left:35px;top:221px" width="12" height="16" viewBox="0 0 12 16"><path d="M5 1V12" stroke="#1f7fdc" stroke-width="1.8"/><path d="M5 1Q6 5 11 7Q8 4 5.9 1Z" fill="#1f7fdc"/><ellipse cx="3.3" cy="12.5" rx="3" ry="2.6" fill="#1f7fdc"/></svg><div class="nv" style="top:221px;left:53px">音乐</div>
<svg class="a" style="left:33px;top:247px" width="16" height="12" viewBox="0 0 16 12"><rect x="0" y="0" width="16" height="12" fill="#1e78d2"/><rect x="1" y="1" width="14" height="9" fill="#3fa2ee"/></svg><div class="nv" style="top:245px;left:53px">桌面</div>
<svg class="a" style="left:32px;top:271px" width="16" height="13" viewBox="0 0 16 13"><rect x="0" y="0" width="2" height="2" fill="#2e9be8"/><rect x="2.6" y="0" width="2" height="2" fill="#2e9be8"/><rect x="0" y="2.6" width="2" height="2" fill="#2e9be8"/><rect x="2.6" y="2.6" width="2" height="2" fill="#2e9be8"/><path d="M3 6.5H13L14.5 9H1.5Z" fill="#c9cdd1"/><rect x="1.5" y="9" width="13" height="3.5" fill="#444a52"/><rect x="12" y="10.3" width="1.2" height="1" fill="#5fd07a"/></svg><div class="nv" style="top:269px;left:53px">Win10 (C:)</div>
<svg class="a" style="left:32px;top:296px" width="16" height="12" viewBox="0 0 16 12"><path d="M3 4H13L14.5 7H1.5Z" fill="#c9cdd1"/><rect x="1.5" y="7" width="13" height="3.5" fill="#444a52"/><rect x="12" y="8.3" width="1.2" height="1" fill="#5fd07a"/></svg><div class="nv" style="top:293px;left:53px">软件 (D:)</div>
<svg class="a" style="left:32px;top:320px" width="16" height="12" viewBox="0 0 16 12"><path d="M3 4H13L14.5 7H1.5Z" fill="#c9cdd1"/><rect x="1.5" y="7" width="13" height="3.5" fill="#444a52"/><rect x="12" y="8.3" width="1.2" height="1" fill="#5fd07a"/></svg><div class="nv" style="top:317px;left:53px">文档 (E:)</div>
<svg class="a" style="left:29px;top:349px" width="12" height="10" viewBox="0 0 12 10"><path d="M2 8Q6 0 10 8Z" fill="#8fb5c9"/></svg><div class="nv" style="top:345px;left:46px">网络</div>
 <div class="a" style="left:140px;top:97px;width:16px;height:257px;background:#f0f0f0"></div>
 <div class="a" style="left:140px;top:228px;width:16px;height:97px;background:#c1c1c1"></div>
 <svg class="a" style="left:144px;top:104px" width="8" height="5" viewBox="0 0 8 5"><path d="M0.5 4.5L4 1L7.5 4.5" stroke="#555" stroke-width="1.4" fill="none"/></svg>
 <svg class="a" style="left:144px;top:343px" width="8" height="5" viewBox="0 0 8 5"><path d="M0.5 0.5L4 4L7.5 0.5" stroke="#555" stroke-width="1.4" fill="none"/></svg>
 <!-- list header -->
 <div class="a" style="left:177px;top:103px;color:#4c607a">名称</div>
 <svg class="a" style="left:298px;top:97px" width="9" height="5" viewBox="0 0 9 5"><path d="M0.5 4.5L4.5 0.8L8.5 4.5" stroke="#888" stroke-width="1" fill="none"/></svg>
 <div class="a" style="left:431px;top:97px;width:1px;height:25px;background:#e5e5e5"></div>
 <div class="a" style="left:438px;top:103px;color:#4c607a">修改日期</div>
 <div class="a" style="left:576px;top:97px;width:1px;height:25px;background:#e5e5e5"></div>
 <div class="a" style="left:581px;top:103px;color:#4c607a">类型</div>
 <div class="a" style="left:695px;top:97px;width:1px;height:25px;background:#e5e5e5"></div>
 <div class="a" style="left:705px;top:103px;color:#4c607a">大小</div>
 <div class="a" style="left:775px;top:97px;width:1px;height:25px;background:#e5e5e5"></div>
 <div class="fr" style="top:130px"><div class="fi"></div><div class="fn">aaaa常用图片</div><div class="fd">2024/10/9 15:50</div><div class="ft">文件夹</div></div>
<div class="fr" style="top:151px"><div class="fi"></div><div class="fn">aaa录像</div><div class="fd">2024/10/7 10:53</div><div class="ft">文件夹</div></div>
<div class="fr" style="top:172px"><div class="a" style="left:175px;top:0;width:598px;height:21px;background:#d9d9d9"></div><div class="fi"></div><div class="fn">aaa商品</div><div class="fd">2024/12/19 10:20</div><div class="ft">文件夹</div></div>
<div class="fr" style="top:193px"><div class="fi"></div><div class="fn">aaa头像</div><div class="fd">2024/10/7 10:53</div><div class="ft">文件夹</div></div>
<div class="fr" style="top:214px"><div class="fi"></div><div class="fn">aa美食</div><div class="fd">2024/10/7 10:53</div><div class="ft">文件夹</div></div>
<div class="fr" style="top:235px"><div class="fi"></div><div class="fn">aa校园</div><div class="fd">2024/10/7 10:53</div><div class="ft">文件夹</div></div>
<div class="fr" style="top:256px"><div class="fi"></div><div class="fn">a宠物，动物</div><div class="fd">2024/10/7 10:53</div><div class="ft">文件夹</div></div>
<div class="fr" style="top:277px"><div class="fi"></div><div class="fn">a房源</div><div class="fd">2024/10/7 10:53</div><div class="ft">文件夹</div></div>
<div class="fr" style="top:298px"><div class="fi"></div><div class="fn">a风景</div><div class="fd">2024/10/7 10:53</div><div class="ft">文件夹</div></div>
<div class="fr" style="top:319px"><div class="fi"></div><div class="fn">a健康，健身，健身课，健身商品</div><div class="fd">2024/10/7 10:53</div><div class="ft">文件夹</div></div>
<div class="fr" style="top:340px"><div class="fi"></div><div class="fn">a酒店</div><div class="fd">2024/10/7 10:53</div><div class="ft">文件夹</div></div>

 <div class="a" style="left:928px;top:97px;width:16px;height:257px;background:#f0f0f0"></div>
 <div class="a" style="left:928px;top:115px;width:16px;height:24px;background:#c1c1c1"></div>
 <svg class="a" style="left:932px;top:343px" width="8" height="5" viewBox="0 0 8 5"><path d="M0.5 0.5L4 4L7.5 0.5" stroke="#555" stroke-width="1.4" fill="none"/></svg>
 <!-- bottom -->
 <div class="a" style="left:0;top:353px;width:944px;height:82px;background:#f0f0f0"></div>
 <div class="a" style="left:130px;top:369px">文件名(N):</div>
 <div class="a" style="left:192px;top:364px;width:534px;height:25px;border:1px solid #7a7a7a;background:#fff"></div>
 <svg class="a" style="left:711px;top:374px" width="9" height="6" viewBox="0 0 9 6"><path d="M0.5 0.5L4.5 4.5L8.5 0.5" stroke="#444" stroke-width="1" fill="none"/></svg>
 <div class="a" style="left:738px;top:364px;width:189px;height:25px;border:1px solid #adadad;background:#e5e5e5"></div>
 <div class="a" style="left:742px;top:369px">所有文件 (*.*)</div>
 <svg class="a" style="left:911px;top:374px" width="9" height="6" viewBox="0 0 9 6"><path d="M0.5 0.5L4.5 4.5L8.5 0.5" stroke="#444" stroke-width="1" fill="none"/></svg>
 <div class="a" style="left:739px;top:396px;width:87px;height:24px;border:2px solid #0078d7;background:#e1e1e1"></div>
 <div class="a" style="left:762px;top:400px">打开(O)</div>
 <div class="a" style="left:839px;top:396px;width:87px;height:24px;border:1px solid #adadad;background:#e1e1e1"></div>
 <div class="a" style="left:870px;top:400px">取消</div>
 <svg class="a" style="left:932px;top:422px" width="10" height="10" viewBox="0 0 10 10"><g fill="#bdbdbd"><rect x="7" y="1" width="2" height="2"/><rect x="4" y="4" width="2" height="2"/><rect x="7" y="4" width="2" height="2"/><rect x="1" y="7" width="2" height="2"/><rect x="4" y="7" width="2" height="2"/><rect x="7" y="7" width="2" height="2"/></g></svg>
</div>

<svg class="abs" style="left:1643px;top:172px" width="10" height="20" viewBox="0 0 10 20"><path d="M1.5 1H3.5Q5 1 5 2.5V17.5Q5 19 6.5 19H8.5M8.5 1H6.5Q5 1 5 2.5M5 17.5Q5 19 3.5 19H1.5" stroke="#111" stroke-width="1.1" fill="none"/></svg>
<div id="ime" class="abs" style="left:1568px;top:191px;width:285px;height:57px;border:1px solid #c9ced6;border-radius:3px;background:linear-gradient(100deg,#ffffff 0,#ffffff 70%,#fdf6f9 88%,#faf5fc 100%);box-shadow:0 1px 3px rgba(0,0,0,.18)">
 <div class="abs" style="left:11px;top:2px;font-size:16px;color:#2b6cb8">dian</div>
 <div class="abs" style="left:41px;top:4px;width:1.5px;height:18px;background:#b03020"></div>
 <div class="abs" style="left:144px;top:5px;font-size:12.1px;color:#333;white-space:nowrap">9 打开智能写作助手</div>
 <svg class="abs" style="left:258px;top:6px" width="16" height="12" viewBox="0 0 16 12"><path d="M1 5Q3 1 9 1.5Q14 1.5 14 4Q13 8 8 8.5Q3 9 1 5Z" fill="#ec6f2a"/><path d="M3 4Q4 7 7 6.5" stroke="#222" stroke-width="1.6" fill="none"/><path d="M9 9L7 11" stroke="#666" stroke-width="0.8"/></svg>
 <div class="abs" style="left:275px;top:7px;width:4px;height:5px;border-radius:50%;background:#eef27a"></div>
 <div class="abs" style="left:11px;top:29px;font-size:15px;color:#e86a52;white-space:nowrap">1 <span style="font-size:16px;color:#e0502d">点</span></div>
 <div class="abs" style="left:55px;top:29px;font-size:15px;color:#5a8fcf;white-space:nowrap">2 <span style="font-size:16px;color:#2066b8">店</span></div>
 <div class="abs" style="left:100px;top:29px;font-size:15px;color:#5a8fcf;white-space:nowrap">3 <span style="font-size:16px;color:#2066b8">电</span></div>
 <div class="abs" style="left:143px;top:29px;font-size:15px;color:#5a8fcf;white-space:nowrap">4 <span style="font-size:16px;color:#2066b8">垫</span></div>
 <div class="abs" style="left:188px;top:29px;font-size:15px;color:#5a8fcf;white-space:nowrap">5 <span style="font-size:16px;color:#2066b8">·</span></div>
 <svg class="abs" style="left:238px;top:36px" width="6" height="9" viewBox="0 0 6 11"><path d="M4.5 0.5L1 4.5L4.5 8.5" stroke="#e2e6ea" stroke-width="1" fill="none"/></svg>
 <svg class="abs" style="left:252px;top:37px" width="6" height="9" viewBox="0 0 6 9"><path d="M1 0.5L4.5 4.5L1 8.5" stroke="#3d6db8" stroke-width="1" fill="none"/></svg>
 <svg class="abs" style="left:266px;top:39px" width="10" height="6" viewBox="0 0 10 6"><path d="M1 1L5 4.5L9 1" stroke="#3d6db8" stroke-width="1" fill="none"/></svg>
</div>
<div id="scroll" class="abs"></div>
<!-- sogou toolbar -->
<div class="abs" style="left:1670px;top:890px;width:175px;height:20px;border:1px solid #c3ccd8;border-left:none;background:#fff"></div>
<svg class="abs" style="left:1640px;top:884px" width="40" height="24" viewBox="0 0 40 24"><g fill="none" stroke="#ec5f2c" stroke-linecap="round" stroke-linejoin="round"><path d="M4 8.5L26 2.5L34 26" stroke-width="3"/><path d="M4 8.5L9 26" stroke-width="3"/><path d="M26 7.5Q12 8 9.5 13Q9 18 12 20L25.5 18.5" stroke-width="2.6"/><path d="M16.5 13.2L30 12.2" stroke-width="2.4"/></g></svg>

<div class="abs" style="left:1680px;top:892px;font-size:15px;font-weight:bold;color:#1668c8">中</div>
<div class="abs" style="left:1708px;top:896px;width:5px;height:5px;border-radius:50%;border:1.5px solid #1668c8"></div>
<div class="abs" style="left:1714px;top:901px;width:4px;height:7px;border-radius:2px 2px 0 3px;background:#1668c8"></div>
<div class="abs" style="left:1733px;top:895px;width:7px;height:11px;border-radius:4px;background:#1668c8"></div>
<div class="abs" style="left:1730px;top:900px;width:13px;height:9px;border:1.6px solid #1668c8;border-top:none;border-radius:0 0 7px 7px"></div>
<div class="abs" style="left:1753px;top:897px;width:15px;height:12px;border-radius:2px;background:#1668c8"></div>
<div class="abs" style="left:1755px;top:899px;width:11px;height:7px;background:repeating-linear-gradient(90deg,#fff 0 2px,transparent 2px 3px);"></div>
<div class="abs" style="left:1755px;top:901px;width:11px;height:1px;background:#1668c8"></div>
<div class="abs" style="left:1755px;top:904px;width:11px;height:1px;background:#1668c8"></div>
<div class="abs" style="left:1777px;top:897px;width:15px;height:12px;background:linear-gradient(180deg,#e06a8a,#9b7cf0);clip-path:polygon(0 0,30% 0,50% 20%,70% 0,100% 0,100% 40%,80% 40%,80% 100%,20% 100%,20% 40%,0 40%)"></div>
<div class="abs" style="left:1789px;top:892px;width:5px;height:5px;border-radius:50%;background:#ef5a3c"></div>
<div class="abs" style="left:1802px;top:897px;width:6px;height:6px;border-radius:2px;background:#1668c8"></div>
<div class="abs" style="left:1809px;top:897px;width:6px;height:6px;border-radius:1px;background:#1668c8;box-shadow:inset 0 0 0 2px #1668c8,inset 0 0 0 3px #fff"></div>
<div class="abs" style="left:1802px;top:904px;width:6px;height:6px;border-radius:1px;background:#1668c8"></div>
<div class="abs" style="left:1809px;top:904px;width:6px;height:6px;border-radius:1px;background:#1668c8"></div>
<div class="abs" style="left:1824px;top:898px;width:13px;height:6px;border-radius:3px;background:#f07a2a"></div>
<div class="abs" style="left:1838px;top:897px;width:4px;height:5px;border-radius:50%;background:#eef08a"></div>
<!-- thermometer -->
<div class="abs" style="left:1911px;top:856px;width:6px;height:60px;border-radius:3px;background:linear-gradient(180deg,#666 0,#4e7f7a 10%,#a9604e 35%,#b06a4e 75%,#e07a20 100%);border:1px solid #555"></div>
<div class="abs" style="left:1909px;top:901px;width:10px;height:10px;border-radius:50%;background:#e87a18"></div>
<!-- scrollbar details -->
<div class="abs" style="left:1905px;top:14px;width:13px;height:576px;background:#c1c1c1"></div>
<svg class="abs" style="left:1906px;top:4px" width="10" height="6" viewBox="0 0 10 6"><path d="M0.5 5.5L5 0.5L9.5 5.5Z" fill="#a3a3a3"/></svg>
<!-- textarea resize -->
<svg class="abs" style="left:1278px;top:705px" width="10" height="10" viewBox="0 0 10 10"><path d="M9 2L2 9M9 6L6 9" stroke="#888" stroke-width="1"/></svg>

</body></html>
